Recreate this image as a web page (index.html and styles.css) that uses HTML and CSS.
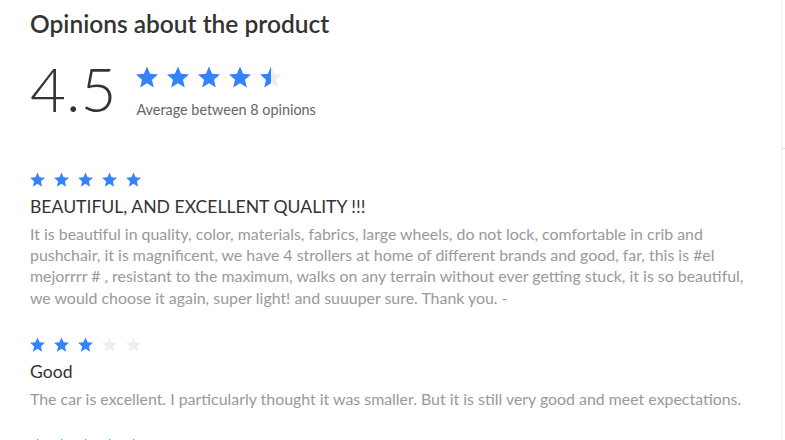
FILE: index.html
```html
<!DOCTYPE html>
<html>
    <head>
        <title>Opinions about the product</title>
        <meta charset="UTF-8">
        <meta name="viewport" content="width=device-width, initial-scale=1.0">
        <link rel="stylesheet" href="styles.css">
    </head>
    <body>
        <svg class="defs" width="0" height="0">
            <defs>
                <path id="star" d="M12 17.27L18.18 21l-1.64-7.03L22 9.24l-7.19-.61L12 2 9.19 8.63 2 9.24l5.46 4.73L5.82 21z"/>
                <linearGradient id="half">
                    <stop offset="50%" stop-color="#3483fa"/>
                    <stop offset="50%" stop-color="#eeeeee"/>
                </linearGradient>
            </defs>
        </svg>
        <div class="page">
            <div class="opinions">
                <h2 class="title">Opinions about the product</h2>

                <div class="summary">
                    <span class="average">4.5</span>
                    <div class="summary-info">
                        <div class="stars big">
                            <svg viewBox="2 2 20 19"><use href="#star"/></svg>
                            <svg viewBox="2 2 20 19"><use href="#star"/></svg>
                            <svg viewBox="2 2 20 19"><use href="#star"/></svg>
                            <svg viewBox="2 2 20 19"><use href="#star"/></svg>
                            <svg viewBox="2 2 20 19" class="half"><use href="#star"/></svg>
                        </div>
                        <p class="count">Average between 8 opinions</p>
                    </div>
                </div>

                <ul class="reviews">
                    <li class="review">
                        <div class="stars">
                            <svg viewBox="2 2 20 19"><use href="#star"/></svg>
                            <svg viewBox="2 2 20 19"><use href="#star"/></svg>
                            <svg viewBox="2 2 20 19"><use href="#star"/></svg>
                            <svg viewBox="2 2 20 19"><use href="#star"/></svg>
                            <svg viewBox="2 2 20 19"><use href="#star"/></svg>
                        </div>
                        <h3 class="review-title">BEAUTIFUL, AND EXCELLENT QUALITY !!!</h3>
                        <p class="review-text">It is beautiful in quality, color, materials, fabrics, large wheels, do not lock, comfortable in crib and<br>
                            pushchair, it is magnificent, we have 4 strollers at home of different brands and good, far, this is #el<br>
                            mejorrrr # , resistant to the maximum, walks on any terrain without ever getting stuck, it is so beautiful,<br>
                            we would choose it again, super light! and suuuper sure. Thank you. -</p>
                    </li>
                    <li class="review">
                        <div class="stars">
                            <svg viewBox="2 2 20 19"><use href="#star"/></svg>
                            <svg viewBox="2 2 20 19"><use href="#star"/></svg>
                            <svg viewBox="2 2 20 19"><use href="#star"/></svg>
                            <svg viewBox="2 2 20 19" class="off"><use href="#star"/></svg>
                            <svg viewBox="2 2 20 19" class="off"><use href="#star"/></svg>
                        </div>
                        <h3 class="review-title">Good</h3>
                        <p class="review-text">The car is excellent. I particularly thought it was smaller. But it is still very good and meet expectations.</p>
                    </li>
                    <li class="review">
                        <div class="stars">
                            <svg viewBox="2 2 20 19"><use href="#star"/></svg>
                            <svg viewBox="2 2 20 19"><use href="#star"/></svg>
                            <svg viewBox="2 2 20 19"><use href="#star"/></svg>
                            <svg viewBox="2 2 20 19"><use href="#star"/></svg>
                            <svg viewBox="2 2 20 19"><use href="#star"/></svg>
                        </div>
                    </li>
                </ul>
            </div>
            <div class="side">
                <span class="tick"></span>
            </div>
        </div>
    </body>
</html>
```

FILE: styles.css
```css
body
{
    margin: 0;
    background-color: white;
    font-family: "Lato", "Liberation Sans", sans-serif;
    color: #333;
    overflow: hidden;
}
svg.defs
{
    position: absolute;
}
div.page
{
    display: flex;
    height: 100vh;
}
div.opinions
{
    width: 751px;
    padding-left: 30px;
    border-right: 1px solid #ededed;
}
div.side
{
    flex: 1;
    padding-top: 148px;
}
span.tick
{
    display: block;
    width: 3px;
    height: 1px;
    background-color: #e0e0e0;
}
h2.title
{
    margin: 9px 0 0 0;
    font-size: 24.5px;
    line-height: 30px;
    font-weight: 600;
}
div.summary
{
    display: flex;
    align-items: flex-start;
    gap: 20px;
    margin-top: 18px;
}
span.average
{
    font-size: 62px;
    line-height: 62px;
    font-weight: 300;
}
div.summary-info
{
    padding-top: 9px;
}
div.stars
{
    display: flex;
    gap: 9px;
    fill: #3483fa;
}
div.stars svg
{
    width: 15px;
    height: 15px;
}
div.stars.big
{
    gap: 9px;
}
div.stars.big svg
{
    width: 22px;
    height: 22px;
}
div.stars svg.off
{
    fill: #eeeeee;
}
div.stars svg.half
{
    fill: url(#half);
}
p.count
{
    margin: 13px 0 0 0;
    font-size: 14.4px;
    color: #666;
}
ul.reviews
{
    list-style: none;
    margin: 53px 0 0 0;
    padding: 0;
}
li.review
{
    margin-bottom: 29px;
}
h3.review-title
{
    margin: 10px 0 0 0;
    font-size: 17.6px;
    line-height: 20px;
    font-weight: normal;
    color: #333;
}
p.review-text
{
    margin: 6px 0 0 0;
    font-size: 15.9px;
    line-height: 21.2px;
    color: #999;
}
```
